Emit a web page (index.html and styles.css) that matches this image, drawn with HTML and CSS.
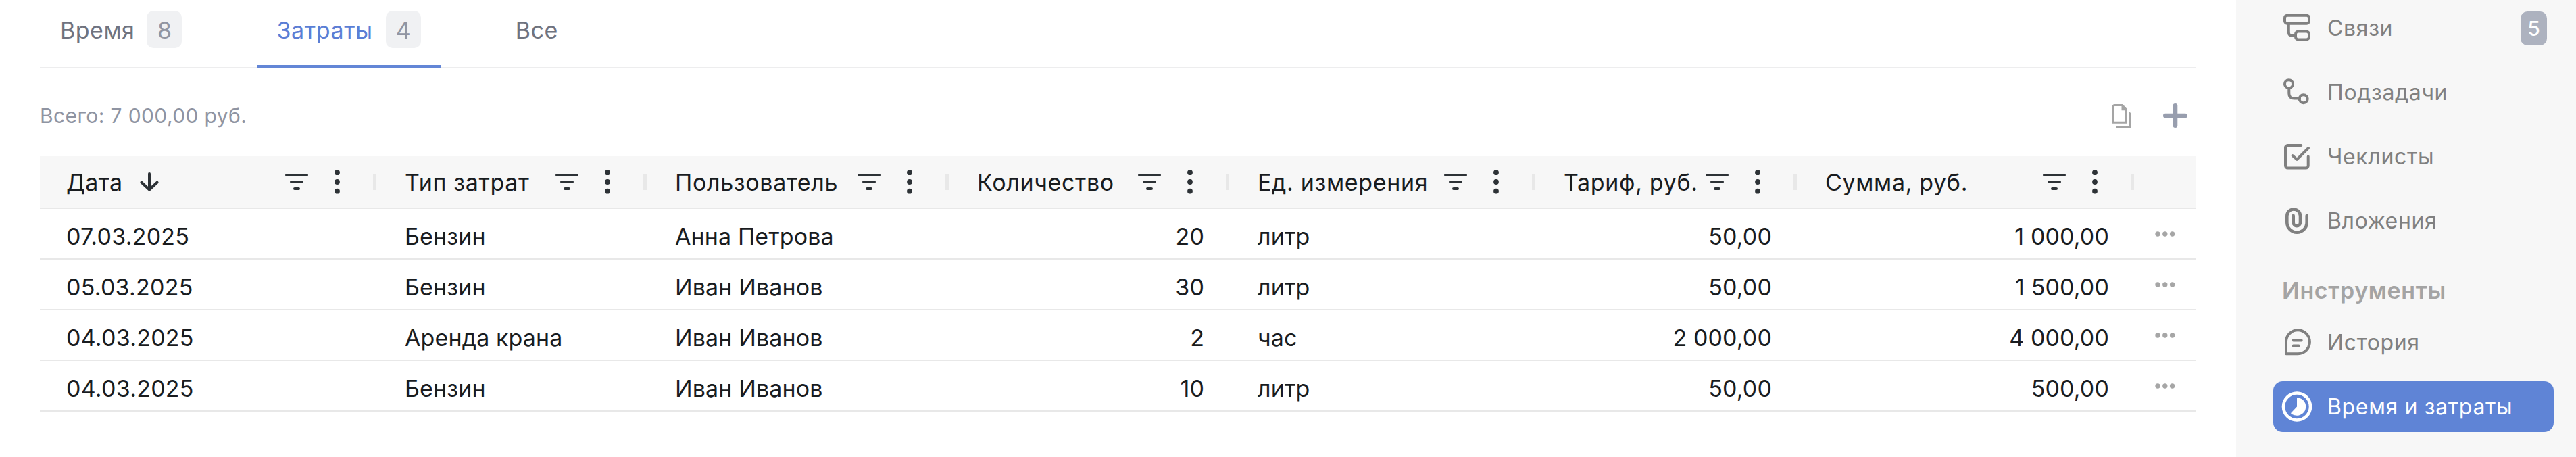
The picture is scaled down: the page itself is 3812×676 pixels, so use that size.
FILE: index.html
```
<!DOCTYPE html>
<html lang="ru">
<head>
<meta charset="utf-8">
<title>Время и затраты</title>
<link rel="stylesheet" href="styles.css">
</head>
<body>
<svg class="sprite" aria-hidden="true">
  <symbol id="filter" viewBox="0 0 34 24"><path d="M2 2h30M9 12h16M14 22h6" fill="none" stroke="currentColor" stroke-width="4" stroke-linecap="round"/></symbol>
  <symbol id="kebab" viewBox="0 0 8 36"><circle cx="4" cy="4.2" r="3.9"/><circle cx="4" cy="18" r="3.9"/><circle cx="4" cy="31.7" r="3.9"/></symbol>
  <symbol id="more" viewBox="0 0 30 8"><circle cx="4" cy="4" r="3.7"/><circle cx="14.8" cy="4" r="3.7"/><circle cx="25.6" cy="4" r="3.7"/></symbol>
</svg>
<div class="page">
  <main class="main">
    <nav class="tabs">
      <a class="tab"><span class="label">Время</span><span class="count">8</span></a>
      <a class="tab tab-active"><span class="label">Затраты</span><span class="count">4</span></a>
      <a class="tab"><span class="label">Все</span></a>
    </nav>
    <div class="toolbar">
      <span class="total">Всего: 7 000,00 руб.</span>
      <svg class="copy" viewBox="0 0 29 35" width="29" height="35"><path d="M4.5 1.5H15.5L21.5 8V27.2H1.5V4.5a3 3 0 0 1 3-3Z" fill="none" stroke="currentColor" stroke-width="3"/><path d="M14.5 1H16.5L22.5 7.5V9.2H14.5Z" fill="currentColor"/><path d="M26 11l3 3V35H7V32H26Z" fill="currentColor"/></svg>
      <svg class="plus" viewBox="0 0 36 36" width="36" height="36"><path d="M18 3.3V32.7M3.3 18H32.7" stroke="currentColor" stroke-width="6.6" stroke-linecap="round"/></svg>
    </div>
    <div class="table">
      <div class="row head">
        <div class="th"><span class="label">Дата</span><svg class="sort" viewBox="0 0 28 28" width="28" height="28"><path d="M14 2V25.5M2.5 14.7L14 25.5L25.5 14.7" fill="none" stroke="currentColor" stroke-width="4" stroke-linecap="round" stroke-linejoin="round"/></svg><svg class="filter"><use href="#filter"/></svg><svg class="kebab"><use href="#kebab"/></svg></div>
        <div class="th"><span class="label">Тип затрат</span><svg class="filter"><use href="#filter"/></svg><svg class="kebab"><use href="#kebab"/></svg></div>
        <div class="th"><span class="label">Пользователь</span><svg class="filter"><use href="#filter"/></svg><svg class="kebab"><use href="#kebab"/></svg></div>
        <div class="th"><span class="label">Количество</span><svg class="filter"><use href="#filter"/></svg><svg class="kebab"><use href="#kebab"/></svg></div>
        <div class="th"><span class="label">Ед. измерения</span><svg class="filter"><use href="#filter"/></svg><svg class="kebab"><use href="#kebab"/></svg></div>
        <div class="th"><span class="label">Тариф, руб.</span><svg class="filter"><use href="#filter"/></svg><svg class="kebab"><use href="#kebab"/></svg></div>
        <div class="th"><span class="label">Сумма, руб.</span><svg class="filter"><use href="#filter"/></svg><svg class="kebab"><use href="#kebab"/></svg></div>
        <div></div>
      </div>
      <div class="row">
        <div class="td date">07.03.2025</div><div class="td">Бензин</div><div class="td">Анна Петрова</div><div class="td num">20</div><div class="td">литр</div><div class="td num">50,00</div><div class="td num">1 000,00</div><div class="actions"><svg class="more"><use href="#more"/></svg></div>
      </div>
      <div class="row">
        <div class="td date">05.03.2025</div><div class="td">Бензин</div><div class="td">Иван Иванов</div><div class="td num">30</div><div class="td">литр</div><div class="td num">50,00</div><div class="td num">1 500,00</div><div class="actions"><svg class="more"><use href="#more"/></svg></div>
      </div>
      <div class="row">
        <div class="td date">04.03.2025</div><div class="td">Аренда крана</div><div class="td">Иван Иванов</div><div class="td num">2</div><div class="td">час</div><div class="td num">2 000,00</div><div class="td num">4 000,00</div><div class="actions"><svg class="more"><use href="#more"/></svg></div>
      </div>
      <div class="row">
        <div class="td date">04.03.2025</div><div class="td">Бензин</div><div class="td">Иван Иванов</div><div class="td num">10</div><div class="td">литр</div><div class="td num">50,00</div><div class="td num">500,00</div><div class="actions"><svg class="more"><use href="#more"/></svg></div>
      </div>
    </div>
  </main>
  <aside class="side">
    <div class="group">
      <a class="item"><svg class="icon" viewBox="0 0 44 44"><rect x="4" y="2.7" width="36" height="12" rx="3.5"/><rect x="20" y="26.6" width="20" height="12" rx="4"/><path d="M9.8 15V27.5q0 5.2 5.2 5.2H19"/></svg>Связи<span class="badge">5</span></a>
      <a class="item"><svg class="icon" viewBox="0 0 44 44"><circle cx="10" cy="9.2" r="6"/><circle cx="31.7" cy="31.2" r="6"/><path d="M10.3 15V23q0 7.6 7.6 7.6H26"/></svg>Подзадачи</a>
      <a class="item"><svg class="icon" viewBox="0 0 44 44"><path d="M28.3 5H8.5A3.5 3.5 0 0 0 5 8.5V35A3.5 3.5 0 0 0 8.5 38.5H35.2A3.5 3.5 0 0 0 38.7 35V21.5M15.7 20.2L22 25.8L39 9"/></svg>Чеклисты</a>
      <a class="item"><svg class="icon clip" viewBox="0 0 44 44"><path d="M16.7 14V24a5.15 5.15 0 0 0 10.3 0V14.3a9.85 9.85 0 0 0-19.7 0V24a14.7 14.7 0 0 0 29.4 0V14"/></svg>Вложения</a>
    </div>
    <h2 class="section">Инструменты</h2>
    <div class="group">
      <a class="item"><svg class="icon" viewBox="0 0 44 44"><path d="M6 38.2V20.5A17.4 17.4 0 0 1 23.4 3.2A17.4 17.4 0 0 1 23.4 38.2ZM16.7 18.5H28.7M16.7 26.5H24.7"/></svg>История</a>
      <a class="item item-active"><svg class="icon clip" viewBox="0 0 44 44"><circle cx="22" cy="21.5" r="20"/><path class="solid" d="M22 21.5V8.2A13.3 13.3 0 1 1 12.9 31.2Z"/></svg>Время и затраты</a>
    </div>
  </aside>
</div>
</body>
</html>
```
FILE: styles.css
```
* { box-sizing: border-box; }

body {
  margin: 0;
  background: #fff;
  color: #191c1f;
  font: 400 34px/40px Inter, "Liberation Sans", sans-serif;
}

.sprite { display: none; }
svg { display: block; flex: none; }

.page { display: flex; height: 676px; overflow: hidden; }

.main { width: 3309px; padding: 0 60px 0 59px; }

/* Tabs */
.tabs {
  display: flex;
  gap: 80px;
  height: 101px;
  border-bottom: 2px solid #ededee;
}
.tab {
  display: flex;
  align-items: center;
  height: 101px;
  padding: 0 31px 14px 30px;
  gap: 18px;
  color: #6f737f;
  letter-spacing: 0.5px;
}
.tab-active {
  padding: 0 30px 9px 29px;
  gap: 19px;
  color: #5b7ed5;
  letter-spacing: 0.6px;
  border-bottom: 5px solid #6386d6;
}
.label { padding-top: 2px; }
.count {
  display: grid;
  place-items: center;
  width: 52px;
  height: 55px;
  padding-top: 2px;
  border-radius: 10px;
  background: #f0f1f3;
  color: #9195a2;
  letter-spacing: 0;
}

/* Toolbar */
.toolbar {
  display: flex;
  align-items: center;
  height: 130px;
  padding: 10px 12px 0 0;
}
.total { flex: 1; color: #8f94a2; font-size: 30px; letter-spacing: 0.38px; }
.copy { color: #a5a5a5; margin-right: 47px; }
.plus { color: #989eae; }

/* Table */
.row {
  display: grid;
  grid-template-columns: 498px 400px 447px 415px 453px 387px 499px 91px;
  height: 75px;
  border-bottom: 2px solid #e8e8e8;
}
.head { height: 78px; background: #f7f7f7; }
.th {
  display: flex;
  align-items: center;
  padding-left: 42px;
  letter-spacing: 0.65px;
  white-space: nowrap;
}
.th:first-child { padding-left: 39px; letter-spacing: 0.4px; }
.th::after { content: ""; width: 5px; height: 23px; background: #e8e8e8; }
.sort { margin-left: 26px; color: #2d3236; }
.filter { width: 34px; height: 24px; margin-left: auto; color: #2d3236; }
.kebab { width: 8px; height: 36px; margin: 0 49px 0 39px; fill: #2d3236; }
.td { padding: 17px 37px 0 42px; line-height: 48px; letter-spacing: 0.12px; white-space: nowrap; }
.date { padding-left: 39px; letter-spacing: 0.25px; }
.num { text-align: right; }
.actions { display: flex; align-items: center; padding-left: 31px; }
.more { width: 30px; height: 8px; fill: #a6a6a6; }

/* Sidebar */
.side { width: 503px; padding: 4px 33px 0 55px; background: #f7f7f7; }
.group { display: flex; flex-direction: column; gap: 20px; }
.item {
  display: flex;
  align-items: center;
  height: 75px;
  padding: 0 10px 0 13px;
  border-radius: 14px;
  color: #808080;
  font-size: 32px;
  letter-spacing: 0.65px;
}
.item-active { background: #5f84d6; color: #fff; }
.icon {
  width: 44px;
  height: 44px;
  margin-right: 23px;
  overflow: visible;
  fill: none;
  stroke: currentColor;
  stroke-width: 4;
  stroke-linecap: round;
  stroke-linejoin: round;
}
.clip { stroke-width: 4.6; }
.solid { fill: currentColor; stroke: none; }
.badge {
  display: grid;
  place-items: center;
  width: 39px;
  height: 50px;
  margin-left: auto;
  border-radius: 10px;
  background: #adb2bf;
  color: #fff;
  font-size: 30px;
  font-weight: 500;
  letter-spacing: 0;
}
.section {
  height: 105px;
  margin: 0;
  padding: 46px 0 0 13px;
  color: #a4a4a4;
  font-size: 34px;
  font-weight: 600;
  line-height: 40px;
  letter-spacing: 0.6px;
}
```
